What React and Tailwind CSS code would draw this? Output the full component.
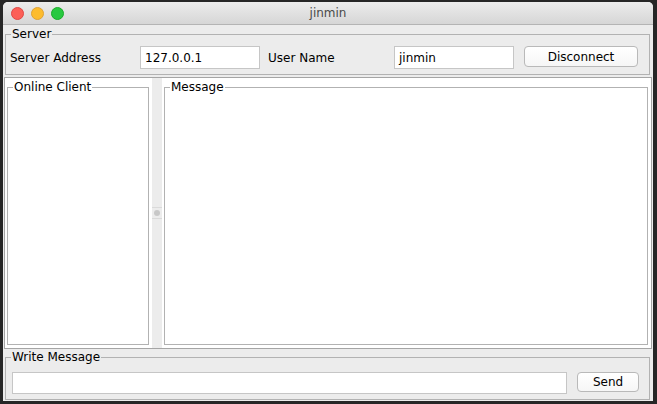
export default function App() {
  const font = { fontFamily: '"DejaVu Sans", "Open Sans", sans-serif' };
  const legendBase = "px-[1px] text-[12px] leading-[16px] text-black";
  return (
    <div
      className="w-[657px] h-[404px] bg-[#262626] pt-[2px] pl-[3px] pr-[4px] pb-[3px] overflow-hidden"
      style={font}
    >
      <div className="h-full flex flex-col bg-[#ececec] rounded-t-[5px] overflow-hidden">
        {/* title bar */}
        <div className="relative h-[23px] shrink-0 flex items-center justify-center bg-gradient-to-b from-[#ececec] to-[#d6d6d6] border-b border-[#b4b4b4]">
          <div className="absolute left-[8px] top-[5px] flex gap-[7px]">
            <span className="w-[13px] h-[13px] rounded-full bg-[#fc5f57] border border-[#df4744]" />
            <span className="w-[13px] h-[13px] rounded-full bg-[#fdbc2e] border border-[#dea235]" />
            <span className="w-[13px] h-[13px] rounded-full bg-[#28c840] border border-[#1aab29]" />
          </div>
          <span className="text-[12px] text-[#4a4a4a] leading-none">jinmin</span>
        </div>

        {/* Server group */}
        <fieldset className="mt-[1px] ml-[2px] mr-[3px] border border-[#b2b2b2] px-[4px] pt-[4px] pb-[5px]">
          <legend className={"ml-[1px] " + legendBase}>Server</legend>
          <div className="flex items-center h-[23px] text-[12px] text-black">
            <span className="w-[130px]">Server Address</span>
            <div className="w-[120px] h-[23px] bg-white border border-[#c6c6c6] flex items-center pl-[4px]">
              127.0.0.1
            </div>
            <span className="w-[126px] ml-[8px]">User Name</span>
            <div className="w-[120px] h-[23px] bg-white border border-[#c6c6c6] flex items-center pl-[4px]">
              jinmin
            </div>
            <button className="ml-[10px] w-[114px] h-[21px] self-start bg-gradient-to-b from-white to-[#f6f6f6] border border-[#b9b9b9] rounded-[4px] text-[12px] leading-none text-black">
              Disconnect
            </button>
          </div>
        </fieldset>

        {/* Split pane */}
        <div className="flex-1 mt-[2px] ml-[1px] mr-[1px] border border-[#a5a5a5] flex min-h-0">
          <div className="w-[147px] bg-white flex flex-col pl-[2px] pr-[3px] pt-[1px] pb-[3px]">
            <fieldset className="flex-1 border border-[#b2b2b2]">
              <legend className={"ml-[5px] " + legendBase}>Online Client</legend>
            </fieldset>
          </div>
          <div className="w-[10px] bg-[#ececec] flex flex-col items-center justify-center">
            <div className="w-full border-t border-[#dadada]" />
            <div className="my-[2px] w-[6px] h-[6px] rounded-full bg-[#c8c8c8]" />
            <div className="w-full border-t border-[#dadada]" />
          </div>
          <div className="flex-1 bg-white flex flex-col pl-[2px] pr-[3px] pt-[1px] pb-[3px]">
            <fieldset className="flex-1 border border-[#b2b2b2]">
              <legend className={"ml-[5px] " + legendBase}>Message</legend>
            </fieldset>
          </div>
        </div>

        {/* Write message */}
        <fieldset className="ml-[2px] mr-[3px] mb-[1px] border border-[#b2b2b2] pl-[6px] pr-[10px] pt-[7px] pb-[5px]">
          <legend className={"-ml-[1px] " + legendBase}>Write Message</legend>
          <div className="flex items-start text-[12px]">
            <div className="flex-1 h-[22px] bg-white border border-[#c6c6c6]" />
            <button className="ml-[10px] w-[62px] h-[20px] bg-gradient-to-b from-white to-[#f6f6f6] border border-[#b9b9b9] rounded-[4px] text-[12px] leading-none text-black">
              Send
            </button>
          </div>
        </fieldset>
      </div>
    </div>
  );
}
